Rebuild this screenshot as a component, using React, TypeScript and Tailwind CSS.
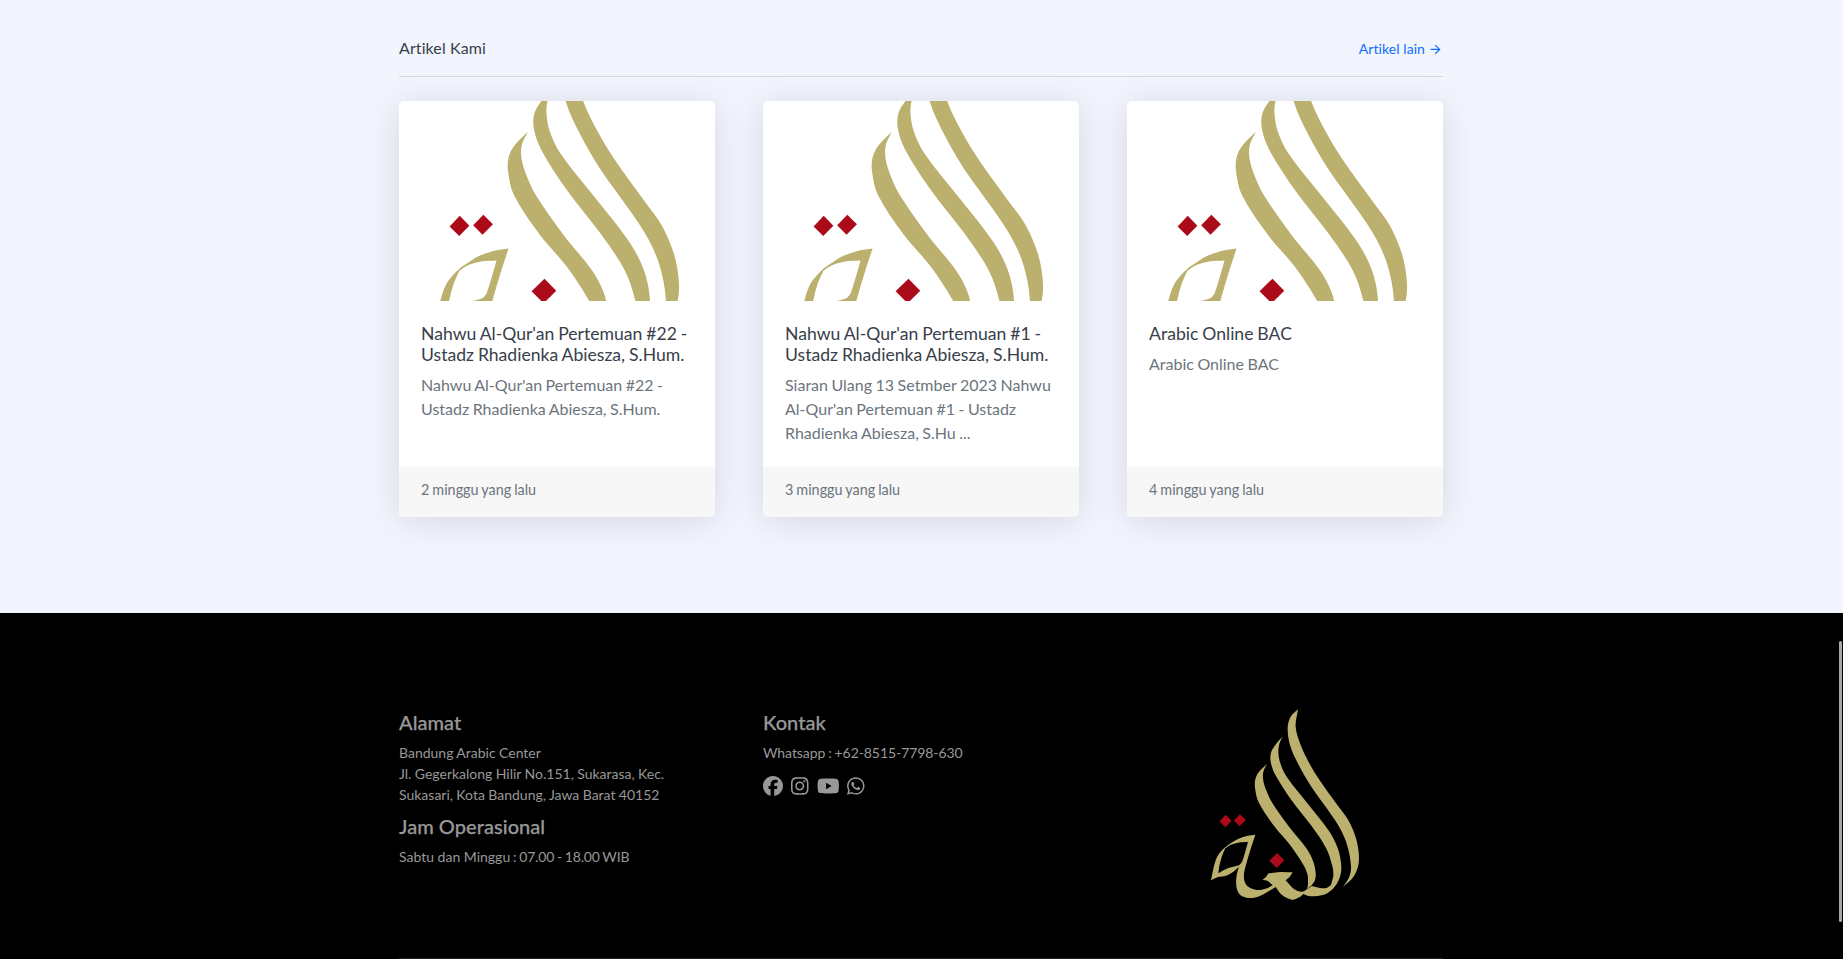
import { FaFacebook, FaInstagram, FaYoutube, FaWhatsapp } from "react-icons/fa6";
import { RiArrowRightLine } from "react-icons/ri";

type Article = { title: string; excerpt: string; age: string };
type Point = [number, number];

const articles: Article[] = [
  {
    title: "Nahwu Al-Qur'an Pertemuan #22 - Ustadz Rhadienka Abiesza, S.Hum.",
    excerpt: "Nahwu Al-Qur'an Pertemuan #22 - Ustadz Rhadienka Abiesza, S.Hum.",
    age: "2 minggu yang lalu",
  },
  {
    title: "Nahwu Al-Qur'an Pertemuan #1 - Ustadz Rhadienka Abiesza, S.Hum.",
    excerpt:
      "Siaran Ulang 13 Setmber 2023 Nahwu Al-Qur'an Pertemuan #1 - Ustadz Rhadienka Abiesza, S.Hu ...",
    age: "3 minggu yang lalu",
  },
  { title: "Arabic Online BAC", excerpt: "Arabic Online BAC", age: "4 minggu yang lalu" },
];

/** Closed outline made of smooth edges; consecutive edges meet in a sharp corner. */
function outline(edges: Point[][]): string {
  let d = `M${edges[0][0].join(" ")}`;
  for (const p of edges) {
    const tangents = p.map((_, i): Point => {
      const a = p[Math.max(i - 1, 0)];
      const b = p[Math.min(i + 1, p.length - 1)];
      const length = Math.hypot(b[0] - a[0], b[1] - a[1]) || 1;
      return [(b[0] - a[0]) / length, (b[1] - a[1]) / length];
    });
    for (let i = 0; i < p.length - 1; i++) {
      const [x1, y1] = p[i];
      const [x2, y2] = p[i + 1];
      const reach = Math.hypot(x2 - x1, y2 - y1) / 3;
      const [ux, uy] = tangents[i];
      const [vx, vy] = tangents[i + 1];
      const c1 = `${(x1 + ux * reach).toFixed(1)} ${(y1 + uy * reach).toFixed(1)}`;
      const c2 = `${(x2 - vx * reach).toFixed(1)} ${(y2 - vy * reach).toFixed(1)}`;
      d += `C${c1} ${c2} ${x2} ${y2}`;
    }
  }
  return d + "Z";
}

const rightStroke = outline([
  [[324, 58], [302, 80], [293, 112], [300, 165], [326, 225], [363, 289], [416, 363], [451, 417], [472, 467], [483, 528], [478, 560], [459, 591]],
  [[459, 591], [490, 561], [505, 526], [506, 487], [497, 442], [475, 391], [442, 345], [387, 268], [357, 218], [332, 165], [317, 110], [324, 58]],
]);

const middleStroke = outline([
  [[278, 139], [256, 165], [243, 188], [242, 215], [255, 253], [302, 327], [363, 406], [408, 474], [427, 528], [430, 556], [423, 585]],
  [[423, 585], [409, 594], [390, 594], [365, 588]],
  [[365, 588], [335, 610]],
  [[335, 610], [356, 618], [383, 618], [413, 609], [438, 585], [452, 553], [453, 518], [443, 474], [417, 423], [351, 338], [290, 260], [271, 220], [265, 185], [268, 162], [278, 139]],
]);

const leftStroke = outline([
  [[231, 221], [206, 247], [196, 268], [195, 293], [206, 337], [253, 409], [302, 467], [342, 528], [353, 556], [354, 582]],
  [[354, 582], [350, 598], [335, 605], [312, 597], [287, 571]],
  [[287, 571], [298, 562], [308, 547]],
  [[308, 547], [272, 546], [235, 550]],
  [[235, 550], [228, 561], [217, 570]],
  [[217, 570], [233, 573], [248, 586]],
  [[248, 586], [226, 596], [200, 600], [177, 592], [164, 575], [162, 552], [167, 528], [181, 480], [196, 434]],
  [[196, 434], [170, 438], [144, 447], [122, 460], [103, 474], [83, 498], [72, 528], [63, 571]],
  [[63, 571], [84, 561], [108, 557], [128, 547], [146, 531]],
  [[146, 531], [139, 563], [140, 594], [151, 615], [176, 624], [204, 620], [231, 607], [257, 591]],
  [[257, 591], [277, 616], [306, 629], [328, 622], [343, 608], [355, 594], [365, 586]],
  [[365, 586], [375, 570], [377, 548], [369, 513], [349, 475], [296, 409], [247, 339], [230, 304], [220, 272], [220, 246], [231, 221]],
]);

const loopHole = outline([
  [[174, 456], [165, 488], [156, 516]],
  [[156, 516], [148, 525], [138, 528], [108, 537], [85, 550]],
  [[85, 550], [88, 528], [96, 498], [106, 475]],
  [[106, 475], [121, 465], [144, 458], [174, 456]],
]);

function Emblem({ viewBox, className }: { viewBox: string; className: string }) {
  return (
    <svg viewBox={viewBox} className={className} preserveAspectRatio="none" aria-hidden="true">
      <g fill="#bbb06d">
        <path d={rightStroke} />
        <path d={middleStroke} />
        <path d={leftStroke + loopHole} fillRule="evenodd" />
      </g>
      <g fill="#ab0b18">
        <path d="M107 374.500L124.500 392.500L106 411.500L88.500 394Z" />
        <path d="M150 372.500L167.500 390L148.500 409L131.500 391.500Z" />
        <path d="M261.500 489L283 511L260 534L238 512Z" />
      </g>
    </svg>
  );
}

function ArticleCard({ title, excerpt, age }: Article) {
  return (
    <article className="flex h-[416px] flex-col overflow-hidden rounded-[5px] bg-white shadow-[0_4px_36px_rgba(0,0,0,0.12)]">
      <Emblem viewBox="-3.8 165.1 576.3 364.7" className="h-[200px] w-full shrink-0" />
      <div className="flex-1 px-[22px] pt-[22px] [word-spacing:-0.6px]">
        <h5 className="mb-2 text-[17.6px] leading-[21px] text-[#383e4a]">{title}</h5>
        <p className="text-base text-[#6c757d]">{excerpt}</p>
      </div>
      <div className="flex h-[50px] items-center bg-[#f7f7f7] px-[22px] pb-1 text-[14.4px] text-[#6c757d] [word-spacing:-0.7px]">
        {age}
      </div>
    </article>
  );
}

export default function App() {
  return (
    <div className="relative flex h-[959px] flex-col overflow-hidden bg-[#f2f5fe] font-['Lato',sans-serif] [font-variant-ligatures:none]">
      <main className="mr-auto ml-[399px] h-[613px] w-[1044px] shrink-0">
        <header className="flex h-[77px] items-center justify-between border-b border-[#d8dade] pt-[20px]">
          <h1 className="text-base tracking-[0.1px] text-[#383e4a]">Artikel Kami</h1>
          <a href="#" className="flex items-center gap-[3px] pt-[2px] text-sm tracking-[0.08px] text-[#0d6efd]">
            Artikel lain <RiArrowRightLine className="h-[15px] w-[15px]" />
          </a>
        </header>
        <section className="mt-6 grid grid-cols-3 gap-12">
          {articles.map((a) => (
            <ArticleCard key={a.age} {...a} />
          ))}
        </section>
      </main>
      <footer className="flex flex-1 flex-col bg-black text-[#989898]">
        <div className="mr-auto ml-[399px] grid h-[345px] w-[1044px] shrink-0 grid-cols-3 gap-12 text-sm leading-[21px]">
          <div className="pt-[97px]">
            <h5 className="mb-2 text-xl leading-6 font-medium tracking-[0.05px] [-webkit-text-stroke:0.25px]">Alamat</h5>
            <p className="whitespace-nowrap [word-spacing:-0.2px]">
              Bandung Arabic Center
              <br />
              Jl. Gegerkalong Hilir No.151, Sukarasa, Kec.
              <br />
              Sukasari, Kota Bandung, Jawa Barat 40152
            </p>
            <h5 className="mt-[9px] mb-2 text-xl leading-6 font-medium tracking-[0.05px] [-webkit-text-stroke:0.25px]">
              Jam Operasional
            </h5>
            <p>
              Sabtu dan Minggu
              <span className="tracking-[-0.17px] [word-spacing:-0.6px]"> : 07.00 - 18.00 WIB</span>
            </p>
          </div>
          <div className="pt-[97px]">
            <h5 className="mb-2 text-xl leading-6 font-medium tracking-[0.05px] [-webkit-text-stroke:0.25px]">Kontak</h5>
            <p className="tracking-[-0.07px] [word-spacing:-0.6px]">Whatsapp : +62-8515-7798-630</p>
            <div className="mt-[13px] flex gap-2 text-xl">
              <FaFacebook className="h-5 w-5" />
              <FaInstagram className="h-5 w-[17.5px]" />
              <FaYoutube className="h-5 w-[22.5px]" />
              <FaWhatsapp className="h-5 w-[17.5px]" />
            </div>
          </div>
          <div className="pt-[77px] pl-[63px]">
            <Emblem viewBox="0 0 600 690" className="h-[230px] w-[200px]" />
          </div>
        </div>
        <div className="mr-auto ml-[399px] h-px w-[1044px] bg-[#212025]" />
      </footer>
      <div className="absolute top-[641px] right-px h-[281px] w-[3px] rounded-full bg-[#a8a8a8]" />
    </div>
  );
}
